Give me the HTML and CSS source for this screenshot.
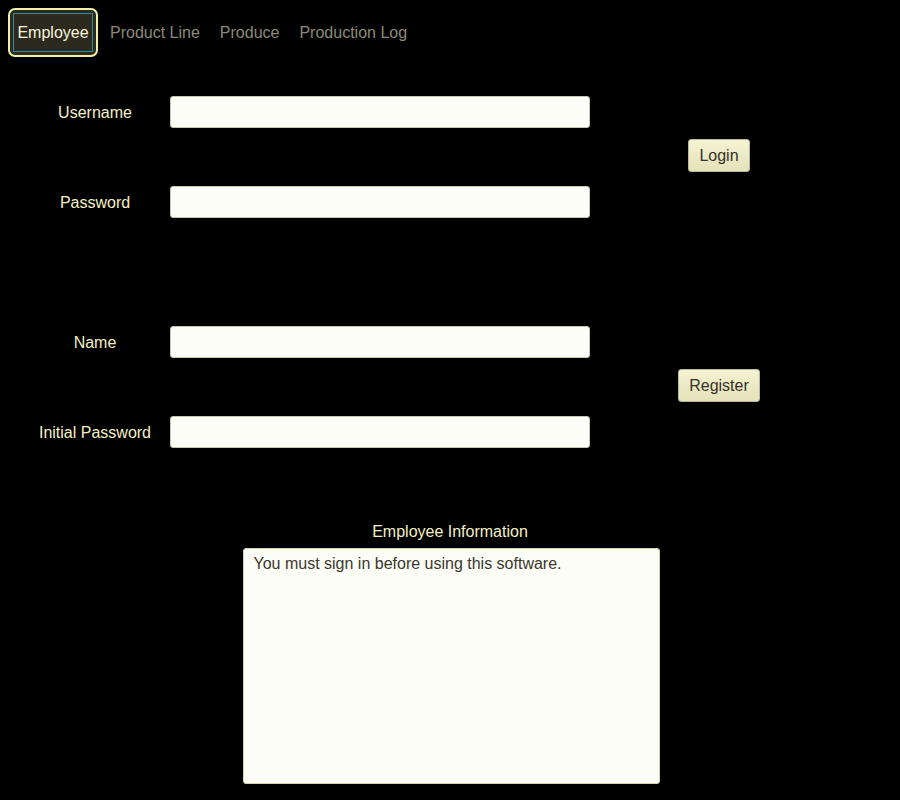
FILE: index.html
```html
<!DOCTYPE html>
<html>
<head>
<meta charset="utf-8">
<link rel="stylesheet" href="styles.css">
</head>
<body>
<div class="app">
  <nav class="tabs">
    <div class="tab tab-active"><span class="tab-inner">Employee</span></div>
    <div class="tab">Product Line</div>
    <div class="tab">Produce</div>
    <div class="tab">Production Log</div>
  </nav>

  <section class="group group-login">
    <label class="lbl">Username</label>
    <div class="field"></div>
    <div class="btn-cell"><button class="btn">Login</button></div>
    <label class="lbl">Password</label>
    <div class="field"></div>
  </section>

  <section class="group group-register">
    <label class="lbl">Name</label>
    <div class="field"></div>
    <div class="btn-cell"><button class="btn">Register</button></div>
    <label class="lbl">Initial Password</label>
    <div class="field"></div>
  </section>

  <section class="info">
    <div class="info-title">Employee Information</div>
    <div class="info-box">You must sign in before using this software.</div>
  </section>
</div>
</body>
</html>
```

FILE: styles.css
```css
html, body {
  margin: 0;
  padding: 0;
  background: #000;
}
body {
  font-family: "Liberation Sans", Arial, sans-serif;
  font-size: 16px;
  color: #f4f0c6;
}
.app {
  width: 900px;
  height: 800px;
  overflow: hidden;
}
.tabs {
  display: flex;
  align-items: center;
  padding: 8px 0 0 8px;
  height: 49px;
}
.tab {
  color: #8c8a78;
  padding: 0 10px;
  line-height: 49px;
}
.tab-active {
  box-sizing: border-box;
  height: 49px;
  width: 90px;
  padding: 3px;
  margin-right: 2px;
  border: 2px solid #f2eea6;
  border-radius: 7px;
  background: #2c2a1e;
  display: flex;
}
.tab-inner {
  flex: 1;
  display: flex;
  align-items: center;
  justify-content: center;
  border: 1px solid #2e8c9c;
  color: #f8f4dc;
  line-height: normal;
}
.group {
  display: grid;
  grid-template-columns: 130px 420px 238px;
  grid-template-rows: 32px 32px;
  column-gap: 10px;
  row-gap: 58px;
  padding-left: 30px;
  align-items: center;
}
.group-login {
  margin-top: 39px;
}
.group-register {
  margin-top: 108px;
}
.lbl {
  text-align: center;
  color: #f4f0c6;
  padding-top: 2px;
}
.field {
  box-sizing: border-box;
  height: 32px;
  background: #fdfdf7;
  border: 1px solid #c9c7b2;
  border-radius: 3px;
}
.btn-cell {
  grid-column: 3;
  grid-row: 1 / span 2;
  display: flex;
  justify-content: center;
  margin-bottom: 3px;
}
.btn {
  font-family: "Liberation Sans", Arial, sans-serif;
  font-size: 16px;
  color: #34322a;
  height: 33px;
  padding: 0 10px;
  background: linear-gradient(#f5f3d2, #e4e2b8);
  border: 1px solid #b9b79c;
  border-radius: 3px;
}
.info {
  margin-top: 74px;
  display: flex;
  flex-direction: column;
  align-items: center;
}
.info-title {
  color: #f4f0c6;
  height: 26px;
  line-height: 20px;
}
.info-box {
  box-sizing: border-box;
  width: 417px;
  height: 236px;
  margin-left: 2px;
  background: #fdfdf7;
  border: 1px solid #d6d4a8;
  border-radius: 3px;
  padding: 6px 10px;
  color: #3a382c;
}
```
